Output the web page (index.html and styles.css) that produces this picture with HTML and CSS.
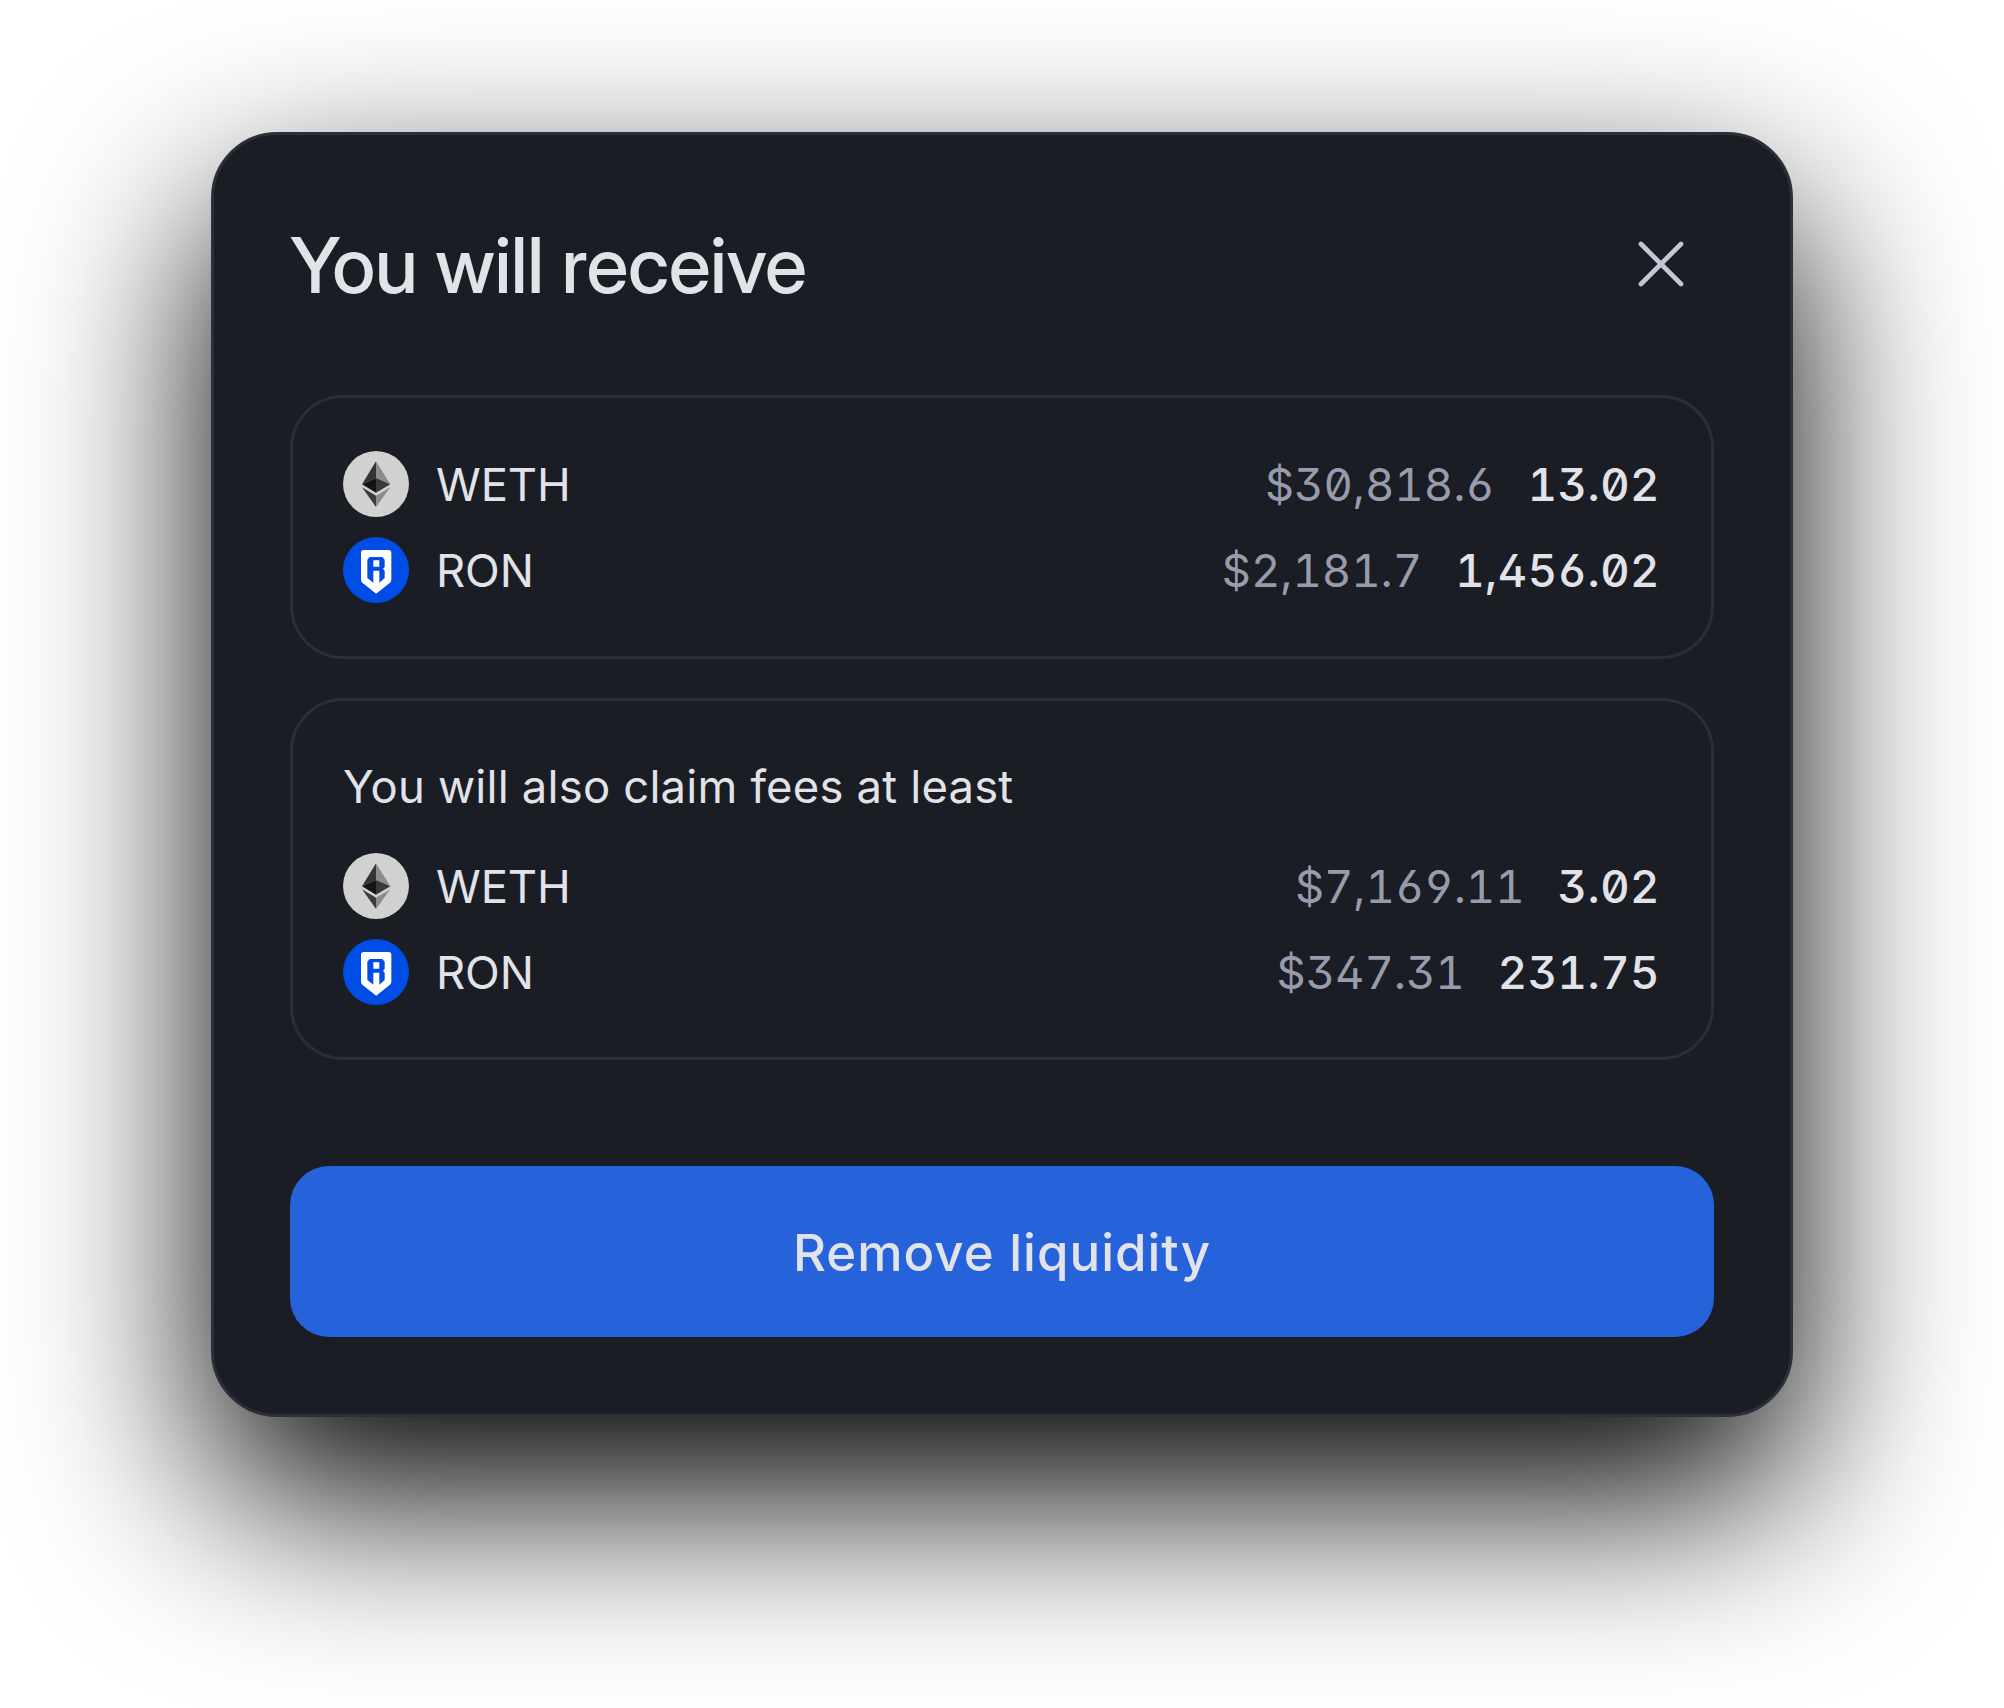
FILE: index.html
```html
<!DOCTYPE html>
<html lang="en">
<head>
<meta charset="utf-8">
<title>Remove liquidity</title>
<link rel="stylesheet" href="styles.css">
</head>
<body>
<svg class="defs" aria-hidden="true">
  <symbol id="weth" viewBox="0 0 198 198">
    <circle cx="99" cy="99" r="99" fill="#d1d1d1"/>
    <path fill="#343434" d="M99 31v50L57 100z"/>
    <path fill="#8c8c8c" d="M99 31v50l43 19z"/>
    <path fill="#141414" d="M99 81v44L57 100z"/>
    <path fill="#393939" d="M99 81v44l43-25z"/>
    <path fill="#3c3c3b" d="M57 109l42 25v34z"/>
    <path fill="#8c8c8c" d="M142 109l-43 25v34z"/>
  </symbol>
  <symbol id="ron" viewBox="0 0 198 198">
    <circle cx="99" cy="99" r="99" fill="#004de5"/>
    <path fill="#fff" d="M62 39h75q8 0 8 8v82q0 5-4 8l-41.500 33L58 137q-4-3-4-8V47q0-8 8-8z"/>
    <path fill="#004de5" fill-rule="evenodd" d="M80 60h38l7 8v22l-5 5 5 6v22l-16 14v-36H91v36l-18-14V68zM91 70v19h18V70z"/>
  </symbol>
</svg>
<main class="modal">
  <header class="head">
    <h1 class="title">You will receive</h1>
    <button class="close" aria-label="Close">
      <svg viewBox="0 0 46 46"><path d="M3 3l40 40M43 3L3 43"/></svg>
    </button>
  </header>
  <section class="card">
    <div class="row"><svg class="icon"><use href="#weth"/></svg><span class="name">WETH</span><span class="usd">$30,818.6</span><span class="amount">13.02</span></div>
    <div class="row"><svg class="icon"><use href="#ron"/></svg><span class="name">RON</span><span class="usd">$2,181.7</span><span class="amount">1,456.02</span></div>
  </section>
  <section class="card fees">
    <p class="note"><span>You will also claim fees at least</span></p>
    <div class="row"><svg class="icon"><use href="#weth"/></svg><span class="name">WETH</span><span class="usd">$7,169.11</span><span class="amount">3.02</span></div>
    <div class="row"><svg class="icon"><use href="#ron"/></svg><span class="name">RON</span><span class="usd">$347.31</span><span class="amount">231.75</span></div>
  </section>
  <button class="submit"><span>Remove liquidity</span></button>
</main>
</body>
</html>
```
FILE: styles.css
```css
* { box-sizing: border-box; }
body {
  display: flow-root; margin: 0; height: 1708px; overflow: hidden;
  background: #fff; color: #e2e3e9;
  font-family: Inter, sans-serif;
}
.defs { display: none; }
.modal {
  width: 1582px; height: 1285px; margin: 132px 0 0 211px; padding: 73px 76px 76px;
  display: flex; flex-direction: column;
  background: #1a1d24; border: 3px solid #2b2e3b; border-radius: 66px;
  box-shadow: 0 79px 190px #000;
}
.head { height: 112px; display: flex; justify-content: space-between; align-items: center; }
.title {
  margin: 0; padding-top: 2px;
  font: 500 77px/112px "Inter Display", Inter, sans-serif; letter-spacing: -.47px;
}
.close { width: 106px; height: 107px; padding: 0 0 1px; border: 0; background: none; display: flex; align-items: center; justify-content: center; }
.close svg { width: 46px; height: 46px; fill: none; stroke: #c3c6d4; stroke-width: 4.7; stroke-linecap: round; }
.card {
  margin-top: 75px; height: 264px; padding: 53px 50px;
  display: flex; flex-direction: column; gap: 20px;
  border: 3px solid #2b2d3a; border-radius: 53px;
}
.fees { margin-top: 39px; height: 362px; }
.note, .row { flex-shrink: 0; font-size: 45.4px; line-height: 66px; }
.note { margin: 0; height: 79px; letter-spacing: .2px; }
.row { display: flex; align-items: center; height: 66px; }
.icon { width: 66px; height: 66px; margin-right: 27px; }
.name, .usd, .amount { padding-top: 2px; }
.name { flex: 1; letter-spacing: -.1px; }
.usd, .amount { font-feature-settings: "tnum", "zero", "ss01"; }
.usd { color: #979bab; letter-spacing: -.05px; }
.amount { margin: 0 1px 0 33px; font-weight: 500; letter-spacing: .5px; }
.submit {
  margin-top: 106px; height: 171px; padding: 2px 0 0; border: 0; border-radius: 39px;
  background: #2662d9; color: #e2e3e9;
  font: 500 51px/1 Inter, sans-serif; letter-spacing: 1px;
}
```
